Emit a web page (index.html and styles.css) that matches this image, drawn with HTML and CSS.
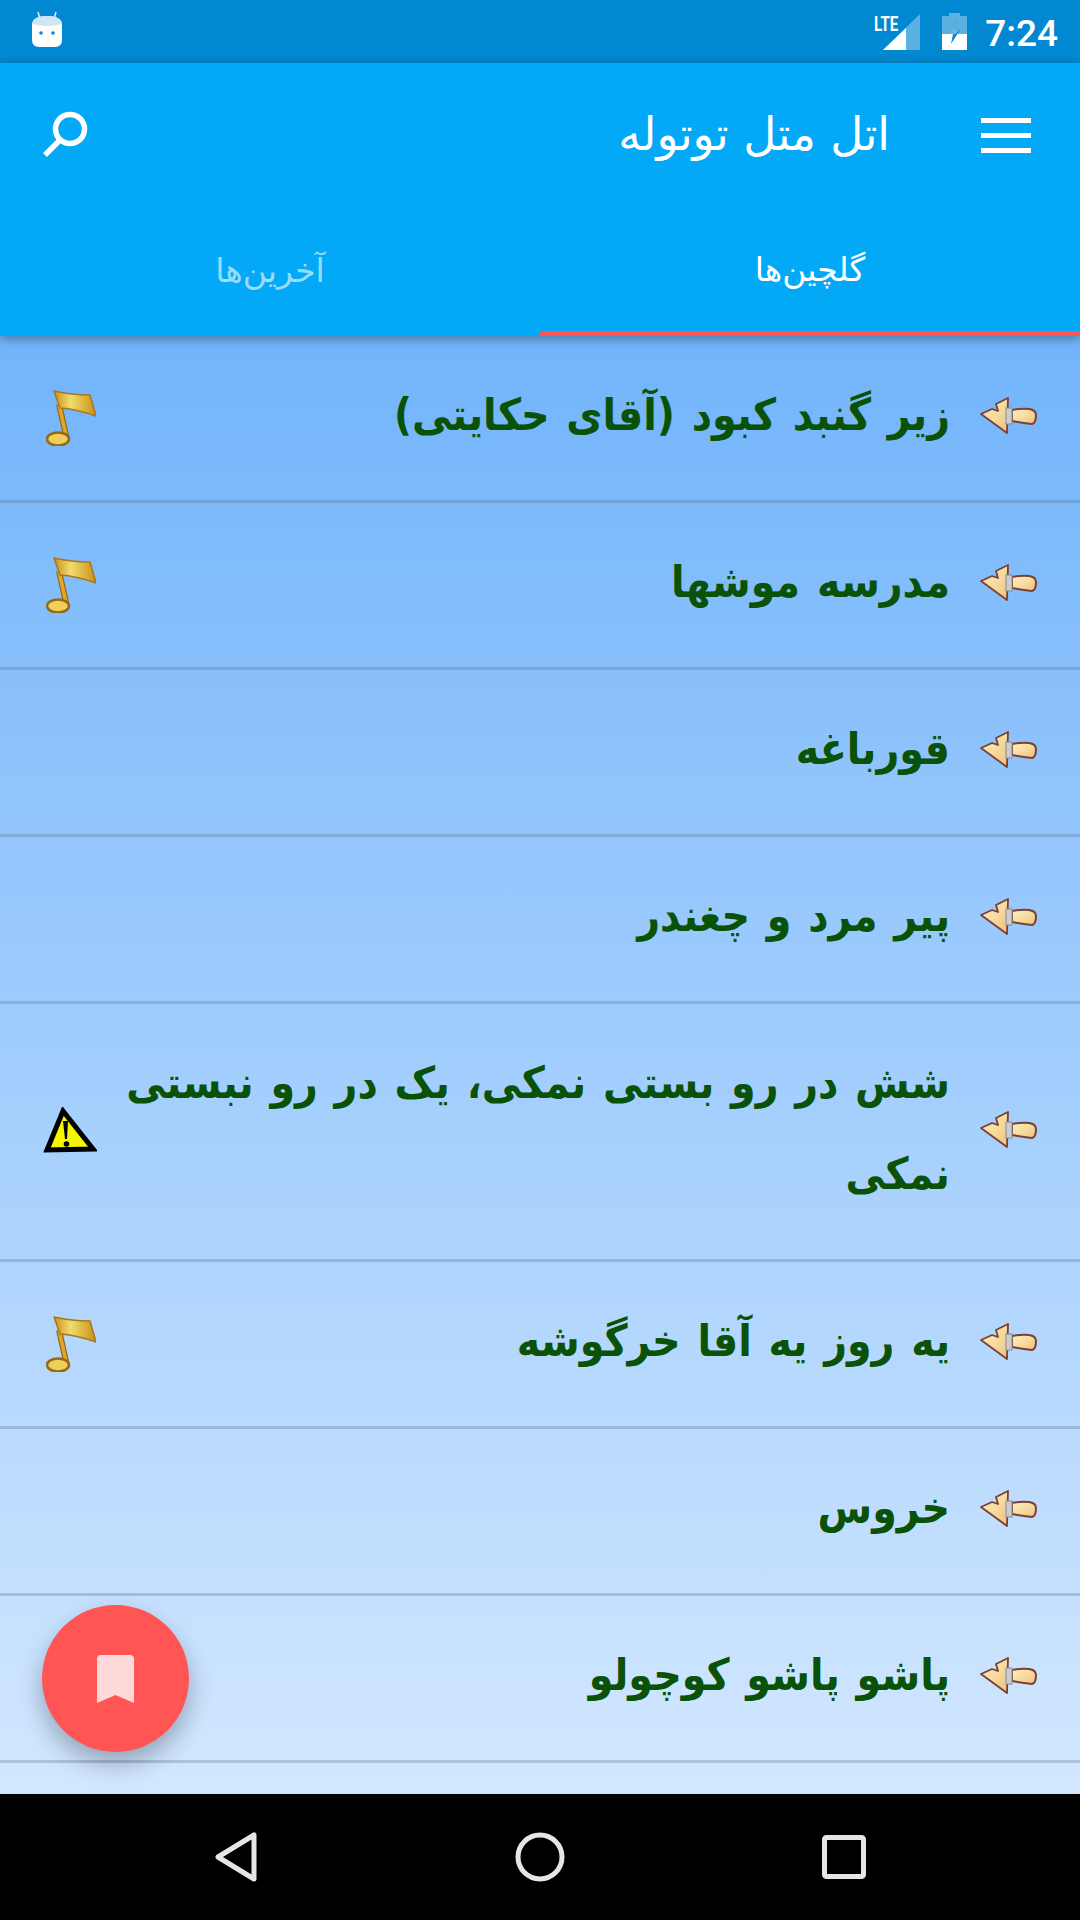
FILE: index.html
```html
<!DOCTYPE html>
<html lang="fa">
<head>
    <meta charset="UTF-8">
    <title>اتل متل توتوله</title>
    <link rel="stylesheet" href="styles.css">
</head>
<body>
    <svg class="defs" width="0" height="0">
        <defs>
            <linearGradient id="woodFill" x1="0" y1="0" x2="1" y2="1">
                <stop offset="0" stop-color="#fdeebf"/>
                <stop offset="0.5" stop-color="#f7dca0"/>
                <stop offset="1" stop-color="#eec07e"/>
            </linearGradient>
            <linearGradient id="goldFill" x1="0" y1="0" x2="1" y2="0">
                <stop offset="0" stop-color="#c8921a"/>
                <stop offset="0.4" stop-color="#f2dc6c"/>
                <stop offset="1" stop-color="#c88f18"/>
            </linearGradient>
            <symbol id="arrow" viewBox="0 0 57 37">
                <path d="M1 17 L12 12 L18 14 L16 7 L28 1 L27 36 Z" fill="url(#woodFill)" stroke="#7a3f35" stroke-width="1.800" stroke-linejoin="round"/>
                <path d="M32 13 Q42 11 49 12 Q56 13 56 18 Q56 26 52 27 Q42 26 32 24 Z" fill="url(#woodFill)" stroke="#7a3f35" stroke-width="2"/>
                <rect x="26" y="11" width="6" height="16" fill="#c9cdd0" stroke="#868c92"/>
            </symbol>
            <symbol id="note" viewBox="0 0 50 56">
                <path d="M13 14 L21 50" stroke="#96691a" stroke-width="6" fill="none"/>
                <path d="M13 14 L21 50" stroke="#e0a826" stroke-width="3.500" fill="none"/>
                <path d="M8 1 Q26 5 44 5 L50 26 Q30 19 14 18 Z" fill="url(#goldFill)" stroke="#a8761c" stroke-width="1.500" stroke-linejoin="round"/>
                <ellipse cx="12" cy="49" rx="11" ry="6.500" fill="#f0cf58" stroke="#96691a" stroke-width="2.500"/>
            </symbol>
            <symbol id="warning" viewBox="0 0 54 46">
                <path d="M20 4 L50 42 L4 43 Z" fill="#f6f600" stroke="#000" stroke-width="5" stroke-linejoin="miter"/>
                <path d="M20 14 L25 14 L24 32 L22 32 Z" fill="#000"/>
                <circle cx="23.500" cy="37" r="2.800" fill="#000"/>
            </symbol>
        </defs>
    </svg>

    <div class="status-bar">
        <svg class="robot" width="30" height="36" viewBox="0 0 30 36">
            <path d="M8 8 L6 1 M22 8 L24 1" stroke="#d8ecf8" stroke-width="1.500"/>
            <path d="M0 13 Q1 5 15 5 Q29 5 30 13 L30 29 Q30 36 23 36 L7 36 Q0 36 0 29 Z" fill="#fff"/>
            <path d="M0 13 Q1 5 15 5 Q29 5 30 13 Q15 17 0 13 Z" fill="#cfe6f5"/>
            <circle cx="9" cy="22" r="1.800" fill="#0288d1"/>
            <circle cx="21" cy="22" r="1.800" fill="#0288d1"/>
        </svg>
        <div class="status-right">
            <div class="signal">
                <span class="lte">LTE</span>
                <svg width="37" height="36" viewBox="0 0 37 36">
                    <path d="M37 0 L37 36 L0 36 Z" fill="#fff" opacity="0.35"/>
                    <path d="M23 14 L23 36 L0 36 Z" fill="#fff"/>
                </svg>
            </div>
            <svg class="battery" width="25" height="37" viewBox="0 0 25 37">
                <path d="M7 0 H18 V3 H25 V37 H0 V3 H7 Z" fill="#fff" opacity="0.35"/>
                <path d="M0 21 H25 V37 H0 Z" fill="#fff"/>
                <path d="M15 7 L6 21 L11 21 L9 31 L18 17 L13 17 Z" fill="#0288d1"/>
                <path d="M15 7 L6 21 L14 21 L17 17 L13 17 Z" fill="#63b6e3"/>
            </svg>
            <span class="clock">7:24</span>
        </div>
    </div>

    <header class="app-bar">
        <div class="toolbar">
            <svg class="search" width="46" height="46" viewBox="0 0 46 46">
                <circle cx="28" cy="18" r="14.500" fill="none" stroke="#fff" stroke-width="5.500"/>
                <path d="M18 29 L3 44" stroke="#fff" stroke-width="5.500"/>
            </svg>
            <div class="title-group">
                <span class="title">اتل متل توتوله</span>
                <div class="menu"><i></i><i></i><i></i></div>
            </div>
        </div>
        <div class="tabs">
            <div class="tab">آخرین‌ها</div>
            <div class="tab active">گلچین‌ها</div>
        </div>
    </header>

    <main class="list">
        <div class="row">
            <svg class="arrow"><use href="#arrow"/></svg>
            <div class="row-text">زیر گنبد کبود (آقای حکایتی)</div>
            <svg class="note"><use href="#note"/></svg>
        </div>
        <div class="row">
            <svg class="arrow"><use href="#arrow"/></svg>
            <div class="row-text">مدرسه موشها</div>
            <svg class="note"><use href="#note"/></svg>
        </div>
        <div class="row">
            <svg class="arrow"><use href="#arrow"/></svg>
            <div class="row-text">قورباغه</div>
        </div>
        <div class="row">
            <svg class="arrow"><use href="#arrow"/></svg>
            <div class="row-text">پیر مرد و چغندر</div>
        </div>
        <div class="row">
            <svg class="arrow"><use href="#arrow"/></svg>
            <div class="row-text">شش در رو بستی نمکی، یک در رو نبستی نمکی</div>
            <svg class="warning"><use href="#warning"/></svg>
        </div>
        <div class="row">
            <svg class="arrow"><use href="#arrow"/></svg>
            <div class="row-text">یه روز یه آقا خرگوشه</div>
            <svg class="note"><use href="#note"/></svg>
        </div>
        <div class="row">
            <svg class="arrow"><use href="#arrow"/></svg>
            <div class="row-text">خروس</div>
        </div>
        <div class="row">
            <svg class="arrow"><use href="#arrow"/></svg>
            <div class="row-text">پاشو پاشو کوچولو</div>
        </div>
        <button class="fab">
            <svg width="37" height="48" viewBox="0 0 37 48">
                <path d="M0 4 Q0 0 4 0 H33 Q37 0 37 4 V48 L18.500 40 L0 48 Z" fill="#ffd9d9"/>
            </svg>
        </button>
    </main>

    <nav class="nav-bar">
        <svg width="42" height="50" viewBox="0 0 42 50">
            <path d="M39 3 V47 L3 25 Z" fill="none" stroke="#e6e6e6" stroke-width="5" stroke-linejoin="round"/>
        </svg>
        <svg width="50" height="50" viewBox="0 0 50 50">
            <circle cx="25" cy="25" r="22" fill="none" stroke="#e6e6e6" stroke-width="5"/>
        </svg>
        <svg width="44" height="44" viewBox="0 0 44 44">
            <rect x="2.500" y="2.500" width="39" height="39" rx="2" fill="none" stroke="#e6e6e6" stroke-width="5"/>
        </svg>
    </nav>
</body>
</html>
```

FILE: styles.css
```css
html, body {
    margin: 0;
    padding: 0;
    height: 100%;
}
body {
    display: flex;
    flex-direction: column;
    width: 1080px;
    height: 1920px;
    overflow: hidden;
    font-family: "DejaVu Sans", "Noto Sans", sans-serif;
}
.defs {
    position: absolute;
}
.status-bar {
    display: flex;
    justify-content: space-between;
    align-items: center;
    height: 63px;
    padding: 0 22px 0 32px;
    background-color: #0288d1;
    flex: none;
}
.robot {
    margin-bottom: 5px;
}
.status-right {
    display: flex;
    align-items: center;
}
.signal {
    display: flex;
    align-items: flex-start;
    margin-right: 22px;
}
.lte {
    width: 24px;
    margin-right: -15px;
    font-family: "Roboto", sans-serif;
    font-size: 21px;
    font-weight: 700;
    line-height: 20px;
    color: #fff;
    transform: scaleX(0.72);
    transform-origin: left top;
}
.battery {
    margin-right: 18px;
}
.clock {
    padding-top: 4px;
    font-family: "Roboto", sans-serif;
    font-size: 37px;
    font-weight: 500;
    color: #fff;
}
.app-bar {
    position: relative;
    z-index: 2;
    flex: none;
    height: 273px;
    background-color: #03a9f6;
    box-shadow: 0 3px 10px rgba(0, 0, 0, 0.35);
}
.toolbar {
    display: flex;
    justify-content: space-between;
    align-items: center;
    height: 143px;
    padding: 0 49px 0 42px;
    box-sizing: border-box;
}
.search {
    margin-bottom: 2px;
}
.title-group {
    display: flex;
    align-items: center;
    gap: 91px;
}
.title {
    font-size: 45.500px;
    color: #fff;
}
.menu {
    display: flex;
    flex-direction: column;
    gap: 10px;
    margin-top: 2px;
}
.menu i {
    display: block;
    width: 50px;
    height: 5px;
    background-color: #fff;
}
.tabs {
    display: flex;
    height: 130px;
}
.tab {
    flex: 1;
    display: flex;
    justify-content: center;
    align-items: center;
    padding-top: 3px;
    padding-bottom: 4px;
    font-size: 33px;
    color: rgba(255, 255, 255, 0.6);
}
.tab.active {
    color: #fff;
    padding-bottom: 0;
    border-bottom: 5px solid #ff5252;
    padding-top: 2px;
}
.list {
    position: relative;
    flex: 1;
    min-height: 0;
    overflow: hidden;
    background: linear-gradient(180deg, #72b4fb 0%, #d2e7ff 100%);
}
.row {
    direction: rtl;
    display: flex;
    align-items: center;
    padding: 33px 43px 40px 43px;
    border-bottom: 3px solid rgba(90, 110, 140, 0.3);
}
.arrow {
    flex: none;
    width: 57px;
    height: 37px;
    margin-top: 2px;
}
.row-text {
    flex: 1;
    margin-right: 30px;
    margin-left: 4px;
    font-family: "DejaVu Sans Condensed", "DejaVu Sans", sans-serif;
    font-size: 44px;
    font-stretch: condensed;
    font-weight: 700;
    word-spacing: 3px;
    line-height: 91px;
    color: #0a5208;
}
.note {
    flex: none;
    width: 50px;
    height: 56px;
    margin-top: 6px;
    margin-left: 3px;
}
.warning {
    flex: none;
    width: 54px;
    height: 46px;
    margin-top: 4px;
}
.fab {
    position: absolute;
    left: 42px;
    bottom: 42px;
    display: flex;
    justify-content: center;
    align-items: center;
    width: 147px;
    height: 147px;
    padding: 0;
    border: none;
    border-radius: 50%;
    background-color: #ff5555;
    box-shadow: 0 12px 24px rgba(0, 0, 0, 0.28);
}
.nav-bar {
    flex: none;
    display: flex;
    align-items: center;
    gap: 257.500px;
    height: 126px;
    padding-left: 215px;
    background-color: #000;
}
```
